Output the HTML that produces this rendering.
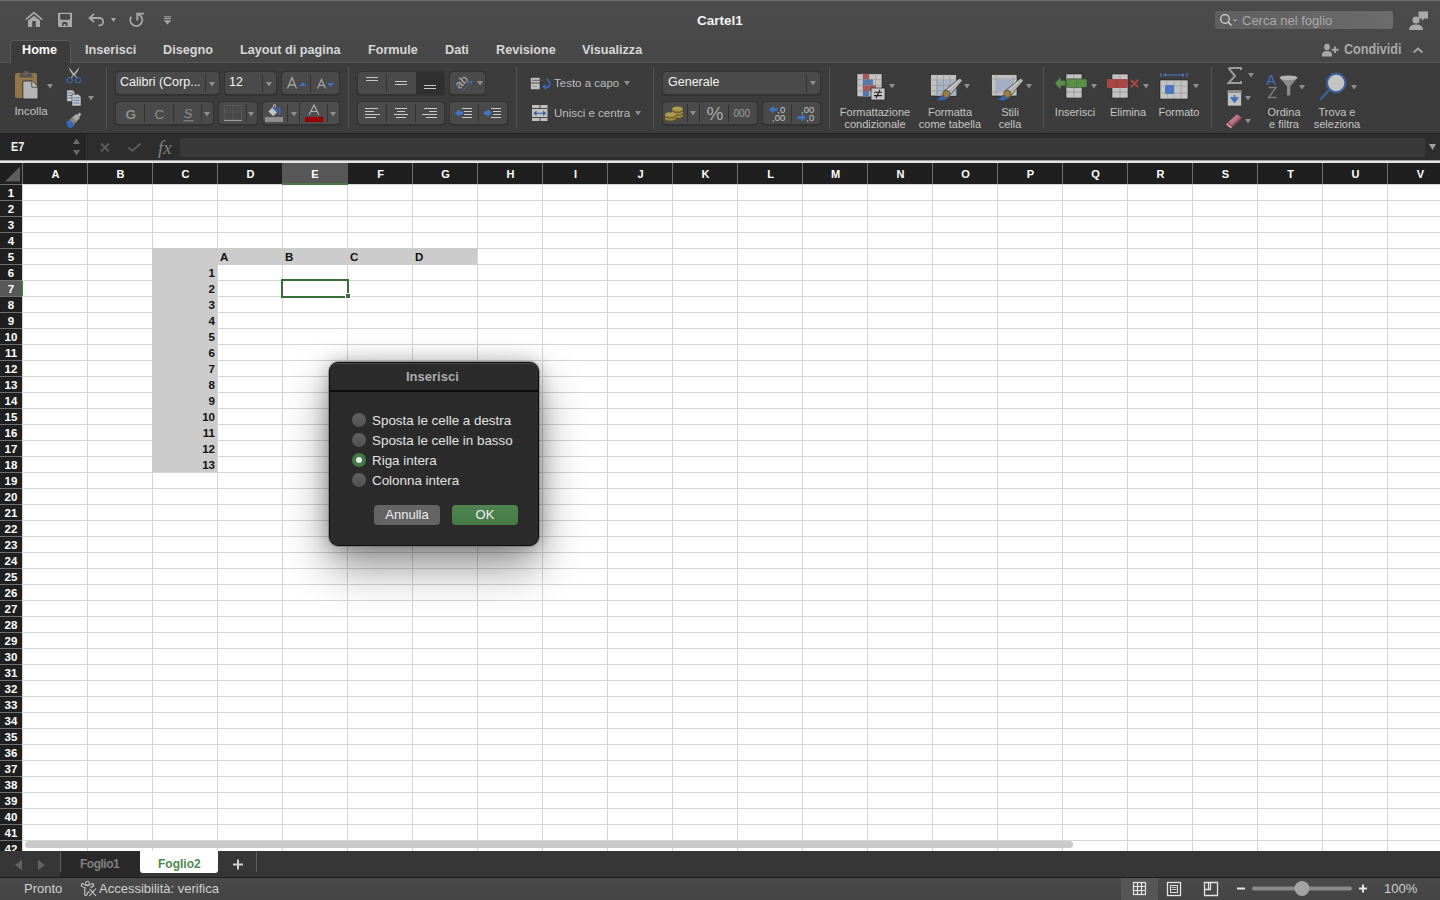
<!DOCTYPE html><html><head><meta charset="utf-8"><style>
*{box-sizing:border-box;margin:0;padding:0}
html,body{width:1440px;height:900px;overflow:hidden;background:#fff;font-family:"Liberation Sans",sans-serif}
.a{position:absolute}
svg{position:absolute;overflow:visible}
#title{left:0;top:0;width:1440px;height:62px;background:linear-gradient(#4b4b4b,#474747);border-top:1px solid #6c6c6c}
#ribbon{left:0;top:62px;width:1440px;height:72px;background:#3c3c3c;border-top:1px solid #575757}
#fbar{left:0;top:133px;width:1440px;height:27px;background:#2d2d2d;border-top:1px solid #232323}
#sep{left:0;top:160px;width:1440px;height:3px;background:#e4e4e4;border-top:1px solid #a0a0a0}
#colhdr{left:0;top:163px;width:1440px;height:21px;background:#1f1f1f}
#rowhdr{left:0;top:184px;width:22px;height:667px;background:#1f1f1f}
#cells{left:22px;top:184px;width:1418px;height:667px;background-color:#fff;
 background-image:linear-gradient(90deg,#d5d5d5 1px,transparent 1px),linear-gradient(#d5d5d5 1px,transparent 1px);
 background-size:65px 16px;background-position:0 0,0 0}
#tabbar{left:0;top:851px;width:1440px;height:26px;background:#363636}
#status{left:0;top:877px;width:1440px;height:23px;background:linear-gradient(#4a4a4a,#444);border-top:1px solid #1c1c1c}
.ch{position:absolute;top:163px;height:21px;width:65px;color:#fff;font-weight:bold;font-size:11px;text-align:center;line-height:23px}
.chl{position:absolute;top:163px;height:21px;width:1px;background:#6e6e6e}
.rh{position:absolute;left:0;width:22px;height:16px;color:#fff;font-weight:bold;font-size:11.5px;text-align:center;line-height:17.5px}
.rhl{position:absolute;left:0;width:22px;height:1px;background:#6e6e6e}
.t{position:absolute;white-space:nowrap}
.box{position:absolute;background:#4b4b4b;border-radius:4px;box-shadow:0 0.5px 0 #2a2a2a}
.vs{position:absolute;width:1px;background:#333}
.rs{position:absolute;width:1px;background:#555;top:67px;height:62px}
.lbl{position:absolute;color:#c4c4c4;font-size:11px;line-height:12px;text-align:center;white-space:nowrap}
.tab{position:absolute;top:42px;font-size:13.6px;color:#d8d8d8;font-weight:bold;white-space:nowrap;transform:scaleX(0.93);transform-origin:0 0}
</style></head><body>
<div id="title" class="a"></div><div id="ribbon" class="a"></div><div id="fbar" class="a"></div><div id="sep" class="a"></div>
<div id="colhdr" class="a"></div><div id="rowhdr" class="a"></div><div id="cells" class="a"></div>
<div id="tabbar" class="a"></div><div id="status" class="a"></div>
<div class="t" style="left:697px;top:13px;font-size:13.5px;font-weight:bold;color:#f2f2f2">Cartel1</div>
<div class="a" style="left:10px;top:40px;width:61px;height:23px;background:#3c3c3c;border:1px solid #5a5a5a;border-bottom:none;border-radius:4px 4px 0 0"></div>
<div class="tab" style="left:22px;color:#fafafa">Home</div>
<div class="tab" style="left:85px;color:#d6d6d6">Inserisci</div>
<div class="tab" style="left:163px;color:#d6d6d6">Disegno</div>
<div class="tab" style="left:240px;color:#d6d6d6">Layout di pagina</div>
<div class="tab" style="left:368px;color:#d6d6d6">Formule</div>
<div class="tab" style="left:445px;color:#d6d6d6">Dati</div>
<div class="tab" style="left:496px;color:#d6d6d6">Revisione</div>
<div class="tab" style="left:582px;color:#d6d6d6">Visualizza</div>
<svg style="left:0;top:163px" width="22" height="21"><path d="M5 18.5 L20 18.5 L20 3.5 Z" fill="#5d5d5d"/></svg>
<div class="chl" style="left:22px"></div>
<div class="ch" style="left:23px;">A</div>
<div class="chl" style="left:87px"></div>
<div class="ch" style="left:88px;">B</div>
<div class="chl" style="left:152px"></div>
<div class="ch" style="left:153px;">C</div>
<div class="chl" style="left:217px"></div>
<div class="ch" style="left:218px;">D</div>
<div class="ch" style="left:283px;background:#575757;left:282px;width:66px;">E</div>
<div class="ch" style="left:348px;">F</div>
<div class="chl" style="left:412px"></div>
<div class="ch" style="left:413px;">G</div>
<div class="chl" style="left:477px"></div>
<div class="ch" style="left:478px;">H</div>
<div class="chl" style="left:542px"></div>
<div class="ch" style="left:543px;">I</div>
<div class="chl" style="left:607px"></div>
<div class="ch" style="left:608px;">J</div>
<div class="chl" style="left:672px"></div>
<div class="ch" style="left:673px;">K</div>
<div class="chl" style="left:737px"></div>
<div class="ch" style="left:738px;">L</div>
<div class="chl" style="left:802px"></div>
<div class="ch" style="left:803px;">M</div>
<div class="chl" style="left:867px"></div>
<div class="ch" style="left:868px;">N</div>
<div class="chl" style="left:932px"></div>
<div class="ch" style="left:933px;">O</div>
<div class="chl" style="left:997px"></div>
<div class="ch" style="left:998px;">P</div>
<div class="chl" style="left:1062px"></div>
<div class="ch" style="left:1063px;">Q</div>
<div class="chl" style="left:1127px"></div>
<div class="ch" style="left:1128px;">R</div>
<div class="chl" style="left:1192px"></div>
<div class="ch" style="left:1193px;">S</div>
<div class="chl" style="left:1257px"></div>
<div class="ch" style="left:1258px;">T</div>
<div class="chl" style="left:1322px"></div>
<div class="ch" style="left:1323px;">U</div>
<div class="chl" style="left:1387px"></div>
<div class="ch" style="left:1388px;">V</div>
<div class="a" style="left:282px;top:183px;width:66px;height:2px;background:#457a45"></div>
<div class="a" style="left:0;top:0;width:22px;height:851px;overflow:hidden">
<div class="rh" style="top:185px;">1</div>
<div class="rhl" style="top:184px"></div>
<div class="rh" style="top:201px;">2</div>
<div class="rhl" style="top:200px"></div>
<div class="rh" style="top:217px;">3</div>
<div class="rhl" style="top:216px"></div>
<div class="rh" style="top:233px;">4</div>
<div class="rhl" style="top:232px"></div>
<div class="rh" style="top:249px;">5</div>
<div class="rhl" style="top:248px"></div>
<div class="rh" style="top:265px;">6</div>
<div class="rhl" style="top:264px"></div>
<div class="rh" style="top:281px;background:#585858;">7</div>
<div class="rhl" style="top:280px"></div>
<div class="rh" style="top:297px;">8</div>
<div class="rhl" style="top:296px"></div>
<div class="rh" style="top:313px;">9</div>
<div class="rhl" style="top:312px"></div>
<div class="rh" style="top:329px;">10</div>
<div class="rhl" style="top:328px"></div>
<div class="rh" style="top:345px;">11</div>
<div class="rhl" style="top:344px"></div>
<div class="rh" style="top:361px;">12</div>
<div class="rhl" style="top:360px"></div>
<div class="rh" style="top:377px;">13</div>
<div class="rhl" style="top:376px"></div>
<div class="rh" style="top:393px;">14</div>
<div class="rhl" style="top:392px"></div>
<div class="rh" style="top:409px;">15</div>
<div class="rhl" style="top:408px"></div>
<div class="rh" style="top:425px;">16</div>
<div class="rhl" style="top:424px"></div>
<div class="rh" style="top:441px;">17</div>
<div class="rhl" style="top:440px"></div>
<div class="rh" style="top:457px;">18</div>
<div class="rhl" style="top:456px"></div>
<div class="rh" style="top:473px;">19</div>
<div class="rhl" style="top:472px"></div>
<div class="rh" style="top:489px;">20</div>
<div class="rhl" style="top:488px"></div>
<div class="rh" style="top:505px;">21</div>
<div class="rhl" style="top:504px"></div>
<div class="rh" style="top:521px;">22</div>
<div class="rhl" style="top:520px"></div>
<div class="rh" style="top:537px;">23</div>
<div class="rhl" style="top:536px"></div>
<div class="rh" style="top:553px;">24</div>
<div class="rhl" style="top:552px"></div>
<div class="rh" style="top:569px;">25</div>
<div class="rhl" style="top:568px"></div>
<div class="rh" style="top:585px;">26</div>
<div class="rhl" style="top:584px"></div>
<div class="rh" style="top:601px;">27</div>
<div class="rhl" style="top:600px"></div>
<div class="rh" style="top:617px;">28</div>
<div class="rhl" style="top:616px"></div>
<div class="rh" style="top:633px;">29</div>
<div class="rhl" style="top:632px"></div>
<div class="rh" style="top:649px;">30</div>
<div class="rhl" style="top:648px"></div>
<div class="rh" style="top:665px;">31</div>
<div class="rhl" style="top:664px"></div>
<div class="rh" style="top:681px;">32</div>
<div class="rhl" style="top:680px"></div>
<div class="rh" style="top:697px;">33</div>
<div class="rhl" style="top:696px"></div>
<div class="rh" style="top:713px;">34</div>
<div class="rhl" style="top:712px"></div>
<div class="rh" style="top:729px;">35</div>
<div class="rhl" style="top:728px"></div>
<div class="rh" style="top:745px;">36</div>
<div class="rhl" style="top:744px"></div>
<div class="rh" style="top:761px;">37</div>
<div class="rhl" style="top:760px"></div>
<div class="rh" style="top:777px;">38</div>
<div class="rhl" style="top:776px"></div>
<div class="rh" style="top:793px;">39</div>
<div class="rhl" style="top:792px"></div>
<div class="rh" style="top:809px;">40</div>
<div class="rhl" style="top:808px"></div>
<div class="rh" style="top:825px;">41</div>
<div class="rhl" style="top:824px"></div>
<div class="rh" style="top:841px;">42</div>
<div class="rhl" style="top:840px"></div>
</div>
<div class="a" style="left:21px;top:281px;width:2px;height:15px;background:#3e7a3e"></div>
<div class="a" style="left:152px;top:248px;width:325px;height:17px;background:#cccccc"></div>
<div class="a" style="left:152px;top:248px;width:65px;height:224px;background:#cccccc"></div>
<div class="t" style="left:220px;top:251px;font-size:11.5px;font-weight:bold;color:#111">A</div>
<div class="t" style="left:285px;top:251px;font-size:11.5px;font-weight:bold;color:#111">B</div>
<div class="t" style="left:350px;top:251px;font-size:11.5px;font-weight:bold;color:#111">C</div>
<div class="t" style="left:415px;top:251px;font-size:11.5px;font-weight:bold;color:#111">D</div>
<div class="t" style="left:152px;width:63px;text-align:right;top:267px;font-size:11.5px;font-weight:bold;color:#111">1</div>
<div class="t" style="left:152px;width:63px;text-align:right;top:283px;font-size:11.5px;font-weight:bold;color:#111">2</div>
<div class="t" style="left:152px;width:63px;text-align:right;top:299px;font-size:11.5px;font-weight:bold;color:#111">3</div>
<div class="t" style="left:152px;width:63px;text-align:right;top:315px;font-size:11.5px;font-weight:bold;color:#111">4</div>
<div class="t" style="left:152px;width:63px;text-align:right;top:331px;font-size:11.5px;font-weight:bold;color:#111">5</div>
<div class="t" style="left:152px;width:63px;text-align:right;top:347px;font-size:11.5px;font-weight:bold;color:#111">6</div>
<div class="t" style="left:152px;width:63px;text-align:right;top:363px;font-size:11.5px;font-weight:bold;color:#111">7</div>
<div class="t" style="left:152px;width:63px;text-align:right;top:379px;font-size:11.5px;font-weight:bold;color:#111">8</div>
<div class="t" style="left:152px;width:63px;text-align:right;top:395px;font-size:11.5px;font-weight:bold;color:#111">9</div>
<div class="t" style="left:152px;width:63px;text-align:right;top:411px;font-size:11.5px;font-weight:bold;color:#111">10</div>
<div class="t" style="left:152px;width:63px;text-align:right;top:427px;font-size:11.5px;font-weight:bold;color:#111">11</div>
<div class="t" style="left:152px;width:63px;text-align:right;top:443px;font-size:11.5px;font-weight:bold;color:#111">12</div>
<div class="t" style="left:152px;width:63px;text-align:right;top:459px;font-size:11.5px;font-weight:bold;color:#111">13</div>
<div class="a" style="left:281px;top:279px;width:68px;height:19px;border:2px solid #3b6d3b"></div>
<div class="a" style="left:345px;top:293px;width:6px;height:6px;background:#3b6d3b;border:1px solid #fff"></div>
<div class="a" style="left:25px;top:841px;width:1048px;height:7px;background:#cacaca;border-radius:4px"></div>
<div class="a" style="left:60px;top:851px;width:80px;height:26px;background:#292929"></div>
<div class="a" style="left:140px;top:851px;width:78px;height:22px;background:#fff;border-radius:0 0 3px 3px"></div>
<div class="t" style="left:80px;top:857px;font-size:12px;font-weight:bold;letter-spacing:-0.5px;color:#808080">Foglio1</div>
<div class="t" style="left:158px;top:857px;font-size:12px;font-weight:bold;color:#4b8a4f">Foglio2</div>
<svg style="left:230px;top:851px" width="16" height="26"><path d="M3 13.5 H13 M8 8.5 V18.5" stroke="#d0d0d0" stroke-width="2"/></svg>
<div class="a" style="left:256px;top:852px;width:1px;height:20px;background:#5e5e5e"></div>
<div class="a" style="left:60px;top:852px;width:1px;height:20px;background:#5e5e5e"></div>
<svg style="left:0;top:851px" width="60" height="26"><path d="M15 14 L22 8.8 L22 19.2 Z" fill="#626262"/><path d="M45 14 L38 8.8 L38 19.2 Z" fill="#626262"/></svg>
<div class="t" style="left:24px;top:881px;font-size:13px;color:#d0d0d0">Pronto</div>
<div class="t" style="left:99px;top:881px;font-size:13px;color:#d0d0d0">Accessibilità: verifica</div>
<div class="t" style="left:1384px;top:881px;font-size:13px;color:#cfcfcf">100%</div>
<div class="a" style="left:1121px;top:878px;width:37px;height:22px;background:#565656"></div>
<div class="a" style="left:329px;top:362px;width:210px;height:184px;border-radius:9px;box-shadow:0 0 0 1px rgba(110,110,110,0.55),0 20px 45px rgba(0,0,0,0.45),0 0 18px rgba(0,0,0,0.25)"></div>
<div class="a" style="left:329px;top:362px;width:210px;height:184px;background:#2b2b2b;border:1px solid #0e0e0e;border-radius:9px;box-shadow:inset 0 1px 0 #4a4a4a"></div>
<div class="a" style="left:330px;top:390px;width:208px;height:2px;background:#0c0c0c"></div>
<div class="t" style="left:406px;top:369px;font-size:13px;font-weight:bold;color:#adadad">Inserisci</div>
<div class="a" style="left:352px;top:413px;width:14px;height:14px;border-radius:50%;background:linear-gradient(#616161,#525252)"></div>
<div class="t" style="left:372px;top:412.5px;font-size:13.4px;color:#e2e2e2">Sposta le celle a destra</div>
<div class="a" style="left:352px;top:433px;width:14px;height:14px;border-radius:50%;background:linear-gradient(#616161,#525252)"></div>
<div class="t" style="left:372px;top:432.5px;font-size:13.4px;color:#e2e2e2">Sposta le celle in basso</div>
<div class="a" style="left:352px;top:453px;width:14px;height:14px;border-radius:50%;background:#3e7b45"></div><div class="a" style="left:356px;top:457px;width:6px;height:6px;border-radius:50%;background:#e6eee6"></div>
<div class="t" style="left:372px;top:452.5px;font-size:13.4px;color:#e2e2e2">Riga intera</div>
<div class="a" style="left:352px;top:473px;width:14px;height:14px;border-radius:50%;background:linear-gradient(#616161,#525252)"></div>
<div class="t" style="left:372px;top:472.5px;font-size:13.4px;color:#e2e2e2">Colonna intera</div>
<div class="a" style="left:374px;top:505px;width:66px;height:20px;border-radius:4px;background:#646464"></div>
<div class="t" style="left:374px;width:66px;text-align:center;top:507px;font-size:13px;color:#ececec">Annulla</div>
<div class="a" style="left:452px;top:505px;width:66px;height:20px;border-radius:4px;background:linear-gradient(#4f8550,#467a47)"></div>
<div class="t" style="left:452px;width:66px;text-align:center;top:507px;font-size:13px;color:#f0f0f0">OK</div>
<div class="rs" style="left:106px"></div>
<div class="rs" style="left:348px"></div>
<div class="rs" style="left:516px"></div>
<div class="rs" style="left:653px"></div>
<div class="rs" style="left:829px"></div>
<div class="rs" style="left:1043px"></div>
<div class="rs" style="left:1211px"></div>
<svg style="left:0;top:62px" width="106" height="72">
<rect x="15" y="11" width="22" height="25" rx="1.8" fill="#917648"/>
<path d="M19.5 12.5 Q19.5 11.5 20.5 11.5 H31.5 Q32.5 11.5 32.5 12.5 V14.5 Q32.5 15.5 31.5 15.5 H20.5 Q19.5 15.5 19.5 14.5 Z" fill="#555"/>
<circle cx="26" cy="11.5" r="2.3" fill="#7d6a44" stroke="#555" stroke-width="1.5"/>
<path d="M22.8 19 H31.8 L38 25.2 V37 H22.8 Z" fill="#b5b5b5" stroke="#1e1e1e" stroke-width="0.8"/>
<path d="M31.8 19 V25.2 H38" fill="#c4c4c4" stroke="#444" stroke-width="0.9"/>
<path d="M68.5 5 Q69.5 9 73.2 13.5 L74.6 12.3 Q71.5 8 68.5 5 Z" fill="#b5b5b5"/>
<path d="M79.5 5 Q78.5 9 74.8 13.5 L73.4 12.3 Q76.5 8 79.5 5 Z" fill="#b5b5b5"/>
<path d="M73.5 13 L71 16 M74.5 13 L77 16" stroke="#b5b5b5" stroke-width="1.1"/>
<circle cx="69.8" cy="18.2" r="2.6" fill="none" stroke="#3a66b0" stroke-width="1.1"/>
<circle cx="78" cy="18.2" r="2.6" fill="none" stroke="#3a66b0" stroke-width="1.1"/>
<path d="M66.8 28 H72.5 L74.8 30.3 V39.5 H66.8 Z" fill="#c6c6c6" stroke="#2a2a2a" stroke-width="0.5"/>
<path d="M68 31 h5 M68 33.5 h5 M68 36 h5" stroke="#5577aa" stroke-width="0.9"/>
<path d="M72 32.3 H78.5 L81 34.8 V44 H72 Z" fill="#c6c6c6" stroke="#2a2a2a" stroke-width="0.5"/>
<path d="M73.5 36 h6 M73.5 38.5 h6 M73.5 41 h6" stroke="#5577aa" stroke-width="0.9"/>
<path d="M77 55 L80.5 51.5" stroke="#b0b0b0" stroke-width="2.6"/>
<path d="M71 56.5 L76 52 L80 56 L75 61 Z" fill="#a8a8a8"/>
<path d="M68.5 59 L72.5 55 L77 59.5 L73 63.5 Z" fill="#8c8474"/>
<path d="M66 60.5 L69 57.5 L75 62.5 Q72 66 69.5 66 Q67 64 66 60.5 Z" fill="#3b68b3"/>
</svg>
<svg style="left:47px;top:84px" width="6" height="5"><path d="M0 0 L6 0 L3 4.5 Z" fill="#8e8e8e"/></svg>
<svg style="left:88px;top:96px" width="6" height="5"><path d="M0 0 L6 0 L3 4.5 Z" fill="#8e8e8e"/></svg>
<div class="lbl" style="left:13px;top:105px;width:36px;font-size:11.5px">Incolla</div>
<div class="box" style="left:115px;top:71px;width:105px;height:24px;background:#4a4a4a;border:1px solid #333"></div>
<div class="vs" style="left:205px;top:74px;height:18px"></div>
<svg style="left:209px;top:82px" width="6" height="5"><path d="M0 0 L6 0 L3 4.5 Z" fill="#8e8e8e"/></svg>
<div class="t" style="left:120px;top:75px;font-size:12.5px;color:#f2f2f2">Calibri (Corp...</div>
<div class="box" style="left:224px;top:71px;width:53px;height:24px;background:#4a4a4a;border:1px solid #333"></div>
<div class="vs" style="left:262px;top:74px;height:18px"></div>
<svg style="left:266px;top:82px" width="6" height="5"><path d="M0 0 L6 0 L3 4.5 Z" fill="#8e8e8e"/></svg>
<div class="t" style="left:229px;top:75px;font-size:12.5px;color:#f2f2f2">12</div>
<div class="box" style="left:281px;top:71px;width:59px;height:24px;background:#4a4a4a;border:1px solid #333"></div>
<div class="vs" style="left:310px;top:74px;height:18px"></div>
<svg style="left:282px;top:72px" width="58" height="22">
<path d="M5.5 16.5 L10 5.5 L14.5 16.5 M7 13 H13" stroke="#a4a4a4" stroke-width="1.3" fill="none"/>
<path d="M17 14 L20.8 10 L24.5 14 Z" fill="#4270bd"/>
<path d="M35.5 16.5 L39.5 7.5 L43.5 16.5 M37 13.3 H42" stroke="#a4a4a4" stroke-width="1.2" fill="none"/>
<path d="M45 11 L52 11 L48.5 15 Z" fill="#4270bd"/>
</svg>
<div class="box" style="left:115px;top:101px;width:99px;height:24px;background:#4a4a4a;border:1px solid #333"></div>
<div class="vs" style="left:144px;top:104px;height:18px"></div>
<div class="vs" style="left:173px;top:104px;height:18px"></div>
<div class="vs" style="left:201px;top:104px;height:18px"></div>
<svg style="left:204px;top:112px" width="6" height="5"><path d="M0 0 L6 0 L3 4.5 Z" fill="#8e8e8e"/></svg>
<svg style="left:116px;top:102px" width="100" height="22">
<text x="9.5" y="17" font-family="Liberation Sans" font-weight="bold" font-size="13.5" fill="#8f8f8f">G</text>
<text x="38.5" y="17" font-family="Liberation Sans" font-size="13.5" fill="#8f8f8f">C</text>
<text x="67.5" y="16" font-family="Liberation Sans" font-size="13" fill="#8f8f8f" transform="skewX(-8) translate(2 0)">S</text>
<path d="M67.5 18.8 H77.5" stroke="#8f8f8f" stroke-width="1"/>
</svg>
<div class="box" style="left:218px;top:101px;width:40px;height:24px;background:#4a4a4a;border:1px solid #333"></div>
<div class="vs" style="left:246px;top:104px;height:18px"></div>
<svg style="left:248px;top:112px" width="6" height="5"><path d="M0 0 L6 0 L3 4.5 Z" fill="#8e8e8e"/></svg>
<svg style="left:219px;top:102px" width="40" height="22">
<path d="M5.5 3 V17 M22.5 3 V17 M14 3 V17 M5 3.5 H23 M5 10 H23" stroke="#6a6a6a" stroke-width="0.9" stroke-dasharray="1 1.6" fill="none"/>
<path d="M5 18.5 H23" stroke="#9a9a9a" stroke-width="1.2"/>
</svg>
<div class="box" style="left:262px;top:101px;width:78px;height:24px;background:#4d4d4d;border:1px solid #333"></div>
<div class="vs" style="left:287px;top:104px;height:18px"></div>
<div class="vs" style="left:327px;top:104px;height:18px"></div>
<div class="a" style="left:299px;top:103px;width:1px;height:20px;background:#333"></div>
<svg style="left:291px;top:112px" width="6" height="5"><path d="M0 0 L6 0 L3 4.5 Z" fill="#8e8e8e"/></svg>
<svg style="left:330px;top:112px" width="6" height="5"><path d="M0 0 L6 0 L3 4.5 Z" fill="#8e8e8e"/></svg>
<svg style="left:263px;top:102px" width="76" height="22">
<path d="M5 9.5 L10.2 4.3 L15.5 9.5 L10.2 14.5 Z" fill="#c6c6c6" stroke="#2a2a2a" stroke-width="0.5"/>
<path d="M9.6 5.2 L14.6 10.2" stroke="#3d6cb8" stroke-width="1.7"/>
<path d="M14 5.8 Q18.3 7.6 16.5 13" stroke="#3d6cb8" stroke-width="1.5" fill="none"/>
<path d="M10.5 5 Q10 2.2 11.8 2.3 Q13 2.6 12.3 5.5" stroke="#c6c6c6" stroke-width="0.9" fill="none"/>
<rect x="2" y="15" width="18" height="5" fill="#8e8e8e"/>
<path d="M46 13 L51 3 L56 13 M47.8 9.5 H54.2" stroke="#adadad" stroke-width="1.2" fill="none"/>
<rect x="42" y="15" width="18" height="5" rx="0.5" fill="#990000"/>
</svg>
<div class="box" style="left:357px;top:71px;width:88px;height:24px;background:#4a4a4a;border:1px solid #333"></div>
<div class="vs" style="left:386px;top:74px;height:18px"></div>
<div class="a" style="left:416px;top:72px;width:28px;height:22px;background:#2f2f2f;border-radius:0 3px 3px 0"></div>
<div class="box" style="left:449px;top:71px;width:37px;height:24px;background:#4a4a4a;border:1px solid #333"></div>
<svg style="left:476.5px;top:81px" width="6" height="5"><path d="M0 0 L6 0 L3 4.5 Z" fill="#8e8e8e"/></svg>
<div class="box" style="left:357px;top:101px;width:88px;height:24px;background:#4a4a4a;border:1px solid #333"></div>
<div class="vs" style="left:386px;top:104px;height:18px"></div>
<div class="vs" style="left:415px;top:104px;height:18px"></div>
<div class="box" style="left:449px;top:101px;width:59px;height:24px;background:#4a4a4a;border:1px solid #333"></div>
<div class="vs" style="left:478px;top:104px;height:18px"></div>
<svg style="left:358px;top:72px" width="150" height="52">
<path d="M366 5.5 H378 M366 8.5 H378" stroke="#c8c8c8" stroke-width="1.1" transform="translate(-358 0)"/>
<path d="M395 9.5 H407 M395 12.5 H407" stroke="#c8c8c8" stroke-width="1.1" transform="translate(-358 0)"/>
<path d="M424 13.5 H436 M424 16.5 H436" stroke="#c8c8c8" stroke-width="1.1" transform="translate(-358 0)"/>
<text x="0" y="0" transform="translate(101.5 17.5) rotate(-45)" font-family="Liberation Sans" font-size="12" fill="#b0b0b0">ab</text>
<path d="M104.5 18.5 L112 11" stroke="#3d6cb8" stroke-width="1"/>
<path d="M110.3 9.4 L114.2 8.8 L113.6 12.7 Z" fill="#3d6cb8"/>
<g transform="translate(-358 -72)" stroke="#c8c8c8" stroke-width="1.1">
<path d="M365 108.5 H378 M365 111.5 H374 M365 114.5 H380 M365 117.5 H376"/>
<path d="M395 108.5 H407 M397 111.5 H405 M394 114.5 H408 M396 117.5 H406"/>
<path d="M424 108.5 H437 M429 111.5 H437 M422 114.5 H437 M426 117.5 H437"/>
<path d="M462 108.5 H472 M464 111.5 H472 M464 114.5 H472 M462 117.5 H472"/>
<path d="M491 108.5 H501 M493 111.5 H501 M493 114.5 H501 M491 117.5 H501"/>
</g>
<g transform="translate(-358 -72)" fill="#4574c2">
<path d="M455 113 L459.5 109 V111.3 H463 V114.7 H459.5 V117 Z"/>
<path d="M492 113 L487.5 109 V111.3 H484 V114.7 H487.5 V117 Z"/>
</g>
</svg>
<svg style="left:520px;top:66px" width="40" height="60">
<rect x="10.5" y="11.5" width="9.5" height="12" fill="#c0c0c0" stroke="#2a2a2a" stroke-width="0.5"/>
<path d="M10.5 17 H20" stroke="#2e2e2e" stroke-width="0.8"/>
<path d="M12 14.3 H24" stroke="#555" stroke-width="0.9"/>
<path d="M12 20.3 H17" stroke="#888" stroke-width="0.8"/>
<path d="M26.5 13 Q30.5 15 29.5 19 Q28.5 22 24.5 21.5" stroke="#3b66ad" stroke-width="1.8" fill="none"/>
<path d="M22 21 L26 18 L26.5 24 Z" fill="#3b66ad"/>
<rect x="12" y="39" width="15.5" height="16" fill="#c0c0c0"/>
<path d="M12 42.5 H27.5 M12 51.5 H27.5 M20 39 V42.5 M20 51.5 V55" stroke="#3a3a3a" stroke-width="0.9"/>
<path d="M15 47.3 H24.5" stroke="#3b5f98" stroke-width="1.1"/>
<path d="M13.3 47.3 L16.5 44.5 V50 Z M26.3 47.3 L23 44.5 V50 Z" fill="#3b5f98"/>
</svg>
<div class="t" style="left:554px;top:77px;font-size:11.5px;color:#bcbcbc">Testo a capo</div>
<svg style="left:624px;top:81px" width="6" height="5"><path d="M0 0 L6 0 L3 4.5 Z" fill="#8e8e8e"/></svg>
<div class="t" style="left:554px;top:107px;font-size:11.5px;color:#bcbcbc">Unisci e centra</div>
<svg style="left:635px;top:111px" width="6" height="5"><path d="M0 0 L6 0 L3 4.5 Z" fill="#8e8e8e"/></svg>
<div class="box" style="left:662px;top:71px;width:159px;height:24px;background:#4a4a4a;border:1px solid #333"></div>
<div class="vs" style="left:806px;top:74px;height:18px"></div>
<svg style="left:810px;top:81px" width="6" height="5"><path d="M0 0 L6 0 L3 4.5 Z" fill="#8e8e8e"/></svg>
<div class="t" style="left:668px;top:75px;font-size:12.5px;color:#f2f2f2">Generale</div>
<div class="box" style="left:662px;top:101px;width:96px;height:24px;background:#4a4a4a;border:1px solid #333"></div>
<div class="vs" style="left:687px;top:104px;height:18px"></div>
<div class="vs" style="left:728px;top:104px;height:18px"></div>
<div class="a" style="left:699px;top:103px;width:1px;height:20px;background:#333"></div>
<svg style="left:690px;top:111px" width="6" height="5"><path d="M0 0 L6 0 L3 4.5 Z" fill="#8e8e8e"/></svg>
<div class="box" style="left:762px;top:101px;width:59px;height:24px;background:#4a4a4a;border:1px solid #333"></div>
<div class="vs" style="left:791px;top:104px;height:18px"></div>
<svg style="left:663px;top:102px" width="160" height="22">
<ellipse cx="14.5" cy="14.5" rx="5.3" ry="2.3" fill="#5e4a1c"/>
<rect x="9.2" y="12.5" width="10.6" height="2" fill="#8a7330"/>
<ellipse cx="14.5" cy="13.5" rx="5.3" ry="2.3" fill="#9c8740"/>
<ellipse cx="14.5" cy="12.5" rx="4.8999999999999995" ry="1.9999999999999998" fill="#ad9d52"/>
<ellipse cx="14.5" cy="11.5" rx="5.3" ry="2.3" fill="#5e4a1c"/>
<rect x="9.2" y="9.5" width="10.6" height="2" fill="#8a7330"/>
<ellipse cx="14.5" cy="10.5" rx="5.3" ry="2.3" fill="#9c8740"/>
<ellipse cx="14.5" cy="9.5" rx="4.8999999999999995" ry="1.9999999999999998" fill="#ad9d52"/>
<ellipse cx="14.5" cy="8.5" rx="5.3" ry="2.3" fill="#5e4a1c"/>
<rect x="9.2" y="6.5" width="10.6" height="2" fill="#8a7330"/>
<ellipse cx="14.5" cy="7.5" rx="5.3" ry="2.3" fill="#9c8740"/>
<ellipse cx="14.5" cy="6.5" rx="4.8999999999999995" ry="1.9999999999999998" fill="#ad9d52"/>
<ellipse cx="7.3" cy="17.2" rx="5.3" ry="2.3" fill="#5e4a1c"/>
<rect x="2.0" y="15.2" width="10.6" height="2" fill="#8a7330"/>
<ellipse cx="7.3" cy="16.2" rx="5.3" ry="2.3" fill="#9c8740"/>
<ellipse cx="7.3" cy="15.2" rx="4.8999999999999995" ry="1.9999999999999998" fill="#ad9d52"/>
<ellipse cx="7.3" cy="14.2" rx="5.3" ry="2.3" fill="#5e4a1c"/>
<rect x="2.0" y="12.2" width="10.6" height="2" fill="#8a7330"/>
<ellipse cx="7.3" cy="13.2" rx="5.3" ry="2.3" fill="#9c8740"/>
<ellipse cx="7.3" cy="12.2" rx="4.8999999999999995" ry="1.9999999999999998" fill="#ad9d52"/>
<text x="43.5" y="18" font-family="Liberation Sans" font-size="19" fill="#a8a8a8">%</text>
<text x="70.5" y="14.5" font-family="Liberation Sans" font-size="10" fill="#a0a0a0">000</text>
<g font-family="Liberation Sans" font-size="9.5" fill="#c4c4c4" text-anchor="end">
<text x="122.3" y="10.5">,0</text><text x="122.3" y="18.5">,00</text>
<text x="151.3" y="10.5">,00</text><text x="151.3" y="18.5">,0</text>
</g>
<path d="M106 7.5 L110.5 3.5 V6 H114.5 V9 H110.5 V11.5 Z" fill="#4270bd"/>
<path d="M143 15.5 L138.5 11.5 V14 H134.5 V17 H138.5 V19.5 Z" fill="#4270bd"/>
</svg>
<svg style="left:850px;top:70px" width="190" height="34">
<rect x="7" y="3.8" width="25" height="23" fill="#c3c3c3" stroke="#262626" stroke-width="0.6"/>
<path d="M7 9.5 H32 M7 15.3 H32 M7 21 H32 M13 3.8 V26.8 M19 3.8 V26.8 M25.5 3.8 V26.8" stroke="#9a9a9a" stroke-width="0.7"/>
<rect x="13" y="3.8" width="6" height="5.7" fill="#a35a5a"/>
<rect x="13" y="9.5" width="10" height="5.8" fill="#5577aa"/>
<rect x="13" y="15.3" width="12.8" height="5.7" fill="#a35a5a"/>
<rect x="13" y="21" width="6" height="5.8" fill="#5577aa"/>
<rect x="21" y="18" width="14" height="12" fill="#c4c4c4" stroke="#222" stroke-width="0.7"/>
<path d="M24 22.2 H32 M24 25.6 H32 M30 19.8 L26 28.2" stroke="#1e1e1e" stroke-width="1.1"/>
<rect x="80.5" y="4.5" width="26" height="21.5" fill="#c2c2c2" stroke="#262626" stroke-width="0.7"/>
<path d="M80.5 10 H106.5 M80.5 15.3 H106.5 M80.5 20.8 H106.5 M87 4.5 V26 M93.5 4.5 V26 M100 4.5 V26" stroke="#9a9a9a" stroke-width="0.8"/>
<rect x="87.4" y="10.4" width="19" height="15.5" fill="#a4b0c4" opacity="0.8"/>
<path d="M87 10 V26 M93.5 10 V26 M100 10 V26 M87 15.3 H106.5 M87 20.8 H106.5" stroke="#8e98a8" stroke-width="0.7"/>
<g transform="translate(0 0)">
<path d="M109.3 8.6 Q111.5 8.4 112.3 10.8 L100 25.2 L94.2 20.8 Z" fill="#b4b4b4" stroke="#262626" stroke-width="0.6"/>
<path d="M109.5 9.5 L96.5 22" stroke="#d2d2d2" stroke-width="1"/>
<path d="M94.5 23 Q90 27.5 86.5 30 Q94.5 31.8 99.5 27 Z" fill="#3b66b0" stroke="#263f6a" stroke-width="0.4"/>
<circle cx="96.4" cy="24" r="3.7" fill="#9a7d45" stroke="#3a2f18" stroke-width="0.5"/>
</g>
<rect x="141.5" y="4.5" width="25.5" height="21.5" fill="#c2c2c2" stroke="#262626" stroke-width="0.7"/>
<path d="M141.5 9 H167 M141.5 22 H167 M146 4.5 V26 M163 4.5 V26" stroke="#9a9a9a" stroke-width="0.7"/>
<rect x="146.5" y="9" width="16.5" height="13" fill="#a3aec2"/>
<g transform="translate(61 0)">
<path d="M109.3 8.6 Q111.5 8.4 112.3 10.8 L100 25.2 L94.2 20.8 Z" fill="#b4b4b4" stroke="#262626" stroke-width="0.6"/>
<path d="M109.5 9.5 L96.5 22" stroke="#d2d2d2" stroke-width="1"/>
<path d="M94.5 23 Q90 27.5 86.5 30 Q94.5 31.8 99.5 27 Z" fill="#3b66b0" stroke="#263f6a" stroke-width="0.4"/>
<circle cx="96.4" cy="24" r="3.7" fill="#9a7d45" stroke="#3a2f18" stroke-width="0.5"/>
</g>
</svg>
<svg style="left:889px;top:84px" width="6" height="5"><path d="M0 0 L6 0 L3 4.5 Z" fill="#8e8e8e"/></svg>
<svg style="left:964px;top:84px" width="6" height="5"><path d="M0 0 L6 0 L3 4.5 Z" fill="#8e8e8e"/></svg>
<svg style="left:1026px;top:84px" width="6" height="5"><path d="M0 0 L6 0 L3 4.5 Z" fill="#8e8e8e"/></svg>
<div class="lbl" style="left:825px;top:106px;width:100px">Formattazione<br>condizionale</div>
<div class="lbl" style="left:900px;top:106px;width:100px">Formatta<br>come tabella</div>
<div class="lbl" style="left:960px;top:106px;width:100px">Stili<br>cella</div>
<svg style="left:1050px;top:70px" width="160" height="34">
<rect x="16" y="4" width="16" height="24" fill="#c3c3c3" stroke="#222" stroke-width="0.6"/>
<path d="M16 10 H32 M16 22 H32 M24 4 V28" stroke="#8a8a8a" stroke-width="0.7"/>
<rect x="16.5" y="8.8" width="20.5" height="8.8" rx="1.5" fill="#5a8f46" stroke="#2e2e2e" stroke-width="0.5"/>
<path d="M26.5 9 V17.5" stroke="#487538" stroke-width="0.8"/>
<path d="M5 13.2 L10.5 7.2 V10.8 H15.5 V15.6 H10.5 V19.4 Z" fill="#5a8f46"/>
<rect x="62" y="4" width="16" height="24" fill="#c3c3c3" stroke="#222" stroke-width="0.6"/>
<path d="M62 10 H78 M62 22 H78 M70 4 V28" stroke="#8a8a8a" stroke-width="0.7"/>
<rect x="57" y="9" width="21" height="9" rx="1.5" fill="#a94646"/>
<path d="M67 9 V18" stroke="#8a3434" stroke-width="0.8"/>
<path d="M81 10 L88 17 M88 10 L81 17" stroke="#b04646" stroke-width="1.8"/>
<rect x="110" y="10" width="28" height="19" fill="#c3c3c3" stroke="#222" stroke-width="0.6"/>
<path d="M110 16 H138 M110 23 H138 M117 10 V29 M124 10 V29 M131 10 V29" stroke="#9a9a9a" stroke-width="0.7"/>
<rect x="115" y="15" width="9" height="9" rx="1.5" fill="#4a76bd"/>
<path d="M111 3 V7 M137 3 V7" stroke="#4a76bd" stroke-width="1.2"/>
<path d="M114 5 H134" stroke="#4a76bd" stroke-width="1.1"/>
<path d="M113 5 L116 3 V7 Z M135 5 L132 3 V7 Z" fill="#4a76bd"/>
</svg>
<svg style="left:1091px;top:84px" width="6" height="5"><path d="M0 0 L6 0 L3 4.5 Z" fill="#8e8e8e"/></svg>
<svg style="left:1143px;top:84px" width="6" height="5"><path d="M0 0 L6 0 L3 4.5 Z" fill="#8e8e8e"/></svg>
<svg style="left:1193px;top:84px" width="6" height="5"><path d="M0 0 L6 0 L3 4.5 Z" fill="#8e8e8e"/></svg>
<div class="lbl" style="left:1035px;top:106px;width:80px">Inserisci</div>
<div class="lbl" style="left:1088px;top:106px;width:80px">Elimina</div>
<div class="lbl" style="left:1139px;top:106px;width:80px">Formato</div>
<svg style="left:1220px;top:62px" width="150" height="72">
<path d="M8.5 6 H21 V8 M8.5 6 L15 14 L8.5 21 H21 V19" stroke="#9a9a9a" stroke-width="2" fill="none"/>
<rect x="7.5" y="28" width="14" height="16" fill="#c0c0c0" stroke="#222" stroke-width="0.5"/>
<rect x="7.5" y="28" width="14" height="3" fill="#8a8a8a"/>
<path d="M14.5 33 V38 M11.5 36 L14.5 40 L17.5 36 Z" stroke="#3d6cb8" stroke-width="1.6" fill="#3d6cb8"/>
<path d="M7 61 L17 52 L22 56 L12 65 Z" fill="#9c5266"/><path d="M8.5 60 L17 52.5 L20 55 L11.5 62.5 Z" fill="#b57a8a"/>
<path d="M7 61 L12 65 L11 66.5 L6 62.5 Z" fill="#d8a0aa"/>
<text x="46.3" y="22.7" font-family="Liberation Sans" font-size="14.5" fill="#4270bd">A</text>
<path d="M48.5 25.5 H56 L48.5 35.5 H56.5" stroke="#7c7c7c" stroke-width="1.5" fill="none"/>
<path d="M59.5 15.5 Q68.5 12.5 77.5 15.5 L70.3 24.5 V33.5 H67 V24.5 Z" fill="#8a8a8a"/>
<ellipse cx="68.5" cy="15.8" rx="8.8" ry="2.4" fill="#b4b4b4"/>
<path d="M109.5 27.5 L101 37" stroke="#3b5f98" stroke-width="2.6" stroke-linecap="round"/>
<circle cx="116.2" cy="21" r="9.3" fill="#c4c4c4" stroke="#3b5f98" stroke-width="2.2"/>
</svg>
<svg style="left:1248px;top:73px" width="6" height="5"><path d="M0 0 L6 0 L3 4.5 Z" fill="#8e8e8e"/></svg>
<svg style="left:1245px;top:96px" width="6" height="5"><path d="M0 0 L6 0 L3 4.5 Z" fill="#8e8e8e"/></svg>
<svg style="left:1245px;top:119px" width="6" height="5"><path d="M0 0 L6 0 L3 4.5 Z" fill="#8e8e8e"/></svg>
<svg style="left:1299px;top:85px" width="6" height="5"><path d="M0 0 L6 0 L3 4.5 Z" fill="#8e8e8e"/></svg>
<svg style="left:1351px;top:85px" width="6" height="5"><path d="M0 0 L6 0 L3 4.5 Z" fill="#8e8e8e"/></svg>
<div class="lbl" style="left:1244px;top:106px;width:80px">Ordina<br>e filtra</div>
<div class="lbl" style="left:1297px;top:106px;width:80px">Trova e<br>seleziona</div>
<svg style="left:0;top:0" width="200" height="40">
<path d="M26.3 19.2 L34 12.6 L41.7 19.2" stroke="#a8a8a8" stroke-width="1.7" fill="none" stroke-linecap="round"/>
<path d="M28 20.6 L34 15.8 L40 20.6 V27 H35.8 V21 H32.2 V27 H28 Z" fill="#a8a8a8"/>
<path d="M58 12.8 H72 V27 H59 L58 26 Z" fill="#a8a8a8"/>
<path d="M60.2 14 H70 V18.3 Q70 19.8 68.5 19.8 H61.7 Q60.2 19.8 60.2 18.3 Z" fill="#484848"/>
<path d="M62 26 V23.5 Q62 22 63.5 22 H66 Q67.5 22 67.5 23.5 V26 Z" fill="#484848"/>
<rect x="63.6" y="24" width="2" height="2" fill="#a8a8a8"/>
<path d="M94 13.8 L89.5 18 L94 22.2 M89.5 18 H99.5 A3.7 3.7 0 0 1 99.5 25.4 H98.5" stroke="#a8a8a8" stroke-width="1.8" fill="none" stroke-linejoin="miter"/>
<path d="M111 18 L116 18 L113.5 22 Z" fill="#a8a8a8"/>
<path d="M131.2 16.8 A6 6 0 1 0 140.6 15.8 L137.8 13.9" stroke="#a8a8a8" stroke-width="1.9" fill="none"/>
<path d="M137.3 20.5 V13.6 H144" stroke="#a8a8a8" stroke-width="1.9" fill="none"/>
<path d="M164 16.8 H171 M164 18.6 H171" stroke="#a8a8a8" stroke-width="1"/>
<path d="M163.8 20.2 H171.2 L167.5 24.6 Z" fill="#a8a8a8"/>
</svg>
<div class="a" style="left:1215px;top:11px;width:178px;height:18px;border-radius:3px;background:linear-gradient(90deg,#5f5f5f,#6c6c6c)"></div>
<svg style="left:1215px;top:11px" width="40" height="18">
<circle cx="10" cy="8" r="4.3" fill="none" stroke="#d8d8d8" stroke-width="1.2"/>
<path d="M13 11 L16.5 14.5" stroke="#d8d8d8" stroke-width="1.3"/>
<path d="M18.5 8.5 L20 10 L21.5 8.5" stroke="#d8d8d8" stroke-width="0.9" fill="none"/>
</svg>
<div class="t" style="left:1242px;top:13px;font-size:13px;color:#a9a9a9">Cerca nel foglio</div>
<svg style="left:1405px;top:8px" width="30" height="24">
<circle cx="11" cy="12" r="3.6" fill="#a9a9a9"/>
<path d="M4 22 Q4 16.5 11 16.5 Q18 16.5 18 22 Z" fill="#a9a9a9"/>
<path d="M13.5 3.5 H23 V10.5 H19.5 L17 13 V10.5 H13.5 Z" fill="#a9a9a9"/>
</svg>
<svg style="left:1320px;top:40px" width="20" height="20">
<ellipse cx="7" cy="7" rx="2.8" ry="3.2" fill="#a6a6a6"/>
<path d="M2 16.5 V14.5 Q2 11 7 11 Q12 11 12 14.5 V16.5 Z" fill="#a6a6a6"/>
<path d="M15 6.5 V13 M11.8 9.8 H18.5" stroke="#a6a6a6" stroke-width="1.9"/>
</svg>
<div class="t" style="left:1343.5px;top:40.5px;font-size:14px;font-weight:bold;color:#a8a8a8;transform:scaleX(0.9);transform-origin:0 0">Condividi</div>
<svg style="left:1410px;top:44px" width="16" height="12"><path d="M3.5 8.5 L8 4.5 L12.5 8.5" stroke="#a6a6a6" stroke-width="1.7" fill="none"/></svg>
<div class="a" style="left:0;top:134px;width:85px;height:26px;background:#262626;border-right:1px solid #1e1e1e"></div>
<div class="t" style="left:10.5px;top:139px;font-size:13.5px;font-weight:bold;color:#f4f4f4;transform:scaleX(0.8);transform-origin:0 0">E7</div>
<svg style="left:70px;top:134px" width="110" height="26">
<path d="M3 10 L6.5 4.5 L10 10 Z M3 16 L6.5 21.5 L10 16 Z" fill="#6a6a6a"/>
<path d="M31 9.5 L39 17.5 M39 9.5 L31 17.5" stroke="#5a5a5a" stroke-width="2"/>
<path d="M58.5 13.5 L62.5 17 L70.5 9.5" stroke="#5a5a5a" stroke-width="2" fill="none"/>
</svg>
<div class="t" style="left:158px;top:137px;font-family:'Liberation Serif',serif;font-style:italic;font-size:19px;color:#808080">fx</div>
<div class="a" style="left:180px;top:138px;width:1245px;height:19px;background:#393939;border-radius:3px 0 0 3px"></div>
<svg style="left:1426px;top:142px" width="12" height="10"><path d="M3 2 L10 2 L6.5 8 Z" fill="#a0a0a0"/></svg>
<svg style="left:0;top:877px" width="230" height="23">
<circle cx="87.4" cy="6.3" r="1.9" fill="none" stroke="#d2d2d2" stroke-width="1"/>
<path d="M82.8 6.6 Q86 8.6 87.4 8.6 Q88.8 8.6 92 6.6 Q94.3 7 93.5 9 Q92 10 90.5 10.6 M82.8 6.6 Q80.6 7.4 81.8 9.4 Q83.8 10.4 85 10.8 L84.6 16.5 Q84.4 19 86.4 18.3 L88 15.2 Q88.8 14.3 89.4 15.6" stroke="#d2d2d2" stroke-width="1.05" fill="none"/>
<path d="M89.6 11.8 L96 19 M96 11.5 L89.3 19" stroke="#d2d2d2" stroke-width="1.05"/>
</svg>
<svg style="left:1120px;top:877px" width="320" height="23">
<rect x="13.5" y="5.5" width="12" height="12" fill="none" stroke="#e4e4e4" stroke-width="1.2"/>
<path d="M17.5 5.5 V17.5 M21.5 5.5 V17.5 M13.5 9.5 H25.5 M13.5 13.5 H25.5" stroke="#e4e4e4" stroke-width="1.2"/>
<rect x="47.5" y="5.5" width="13" height="13" fill="none" stroke="#e4e4e4" stroke-width="1.3"/>
<rect x="50.5" y="8.5" width="7" height="7" fill="none" stroke="#e4e4e4" stroke-width="1"/>
<path d="M51.5 10.5 H56.5 M51.5 12.5 H56.5" stroke="#e4e4e4" stroke-width="0.8"/>
<path d="M84.5 18.5 V5.5 H97.5 V18.5 Z M84.5 12.5 H90.5 V5.5 M88.5 5.5 V12.5" stroke="#e4e4e4" stroke-width="1.3" fill="none"/>
<path d="M117 11.5 H125" stroke="#e4e4e4" stroke-width="2"/>
<rect x="132" y="9.5" width="100" height="4" rx="2" fill="#8a8a8a"/>
<circle cx="182" cy="11.5" r="7.5" fill="#a3a3a3"/>
<path d="M239 11.5 H247 M243 7.5 V15.5" stroke="#e4e4e4" stroke-width="2"/>
</svg>
</body></html>
